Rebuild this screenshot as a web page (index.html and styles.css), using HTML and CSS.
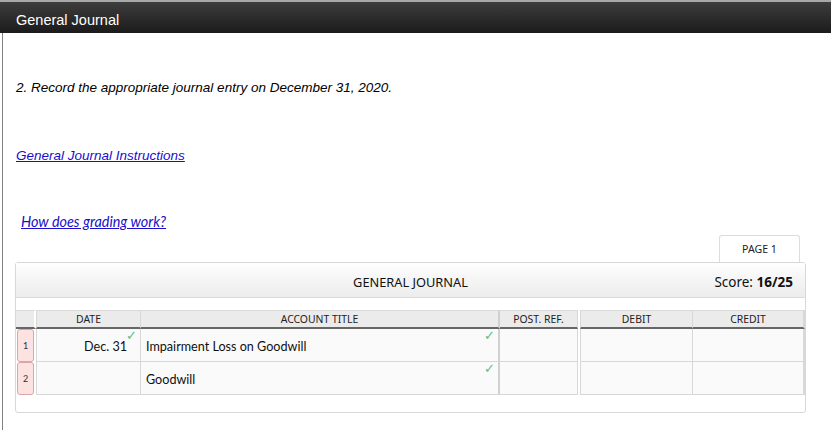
FILE: index.html
```html
<!DOCTYPE html>
<html>
<head>
<meta charset="utf-8">
<link rel="stylesheet" href="styles.css">
</head>
<body>
<div class="topbar">General Journal</div>
<div class="main">
  <p class="question">2. Record the appropriate journal entry on December 31, 2020.</p>
  <p class="instr"><a href="#">General Journal Instructions</a></p>
  <p class="grading"><a href="#">How does grading work?</a></p>
  <div class="tabs"><div class="tab">PAGE 1</div></div>
  <div class="panel">
    <div class="panel-head">
      <span class="panel-title">GENERAL JOURNAL</span>
      <span class="score">Score: <b>16/25</b></span>
    </div>
    <div class="grid">
      <div class="h num"></div>
      <div class="h date">DATE</div>
      <div class="h acct">ACCOUNT TITLE</div>
      <div class="h ref">POST. REF.</div>
      <div class="sp"></div>
      <div class="h deb">DEBIT</div>
      <div class="h cred">CREDIT</div>

      <div class="c num"><span class="rn">1</span></div>
      <div class="c date">Dec. 31<span class="chk">✓</span></div>
      <div class="c acct">Impairment Loss on Goodwill<span class="chk">✓</span></div>
      <div class="c ref"></div>
      <div class="sp"></div>
      <div class="c deb"></div>
      <div class="c cred"></div>

      <div class="c num"><span class="rn">2</span></div>
      <div class="c date"></div>
      <div class="c acct">Goodwill<span class="chk">✓</span></div>
      <div class="c ref"></div>
      <div class="sp"></div>
      <div class="c deb"></div>
      <div class="c cred"></div>
    </div>
  </div>
</div>
</body>
</html>
```
FILE: styles.css
```css
html, body {
  margin: 0;
  padding: 0;
  background: #fff;
}
body {
  font-family: "Liberation Sans", Arial, sans-serif;
  color: #000;
}
.topbar {
  box-sizing: content-box;
  border-top: 2px solid #a8a8a8;
  background: linear-gradient(#3d3d3d, #1b1b1b);
  color: #fff;
  font-size: 14.5px;
  line-height: 28px;
  padding: 4px 0 0 16px;
  height: 27px;
}
.main {
  margin-left: 2px;
  border-left: 1px solid #808080;
  height: 397px;
  padding-left: 12px;
  overflow: hidden;
}
.question {
  margin: 47px 0 0 1px;
  font-size: 13.5px;
  font-style: italic;
  line-height: 16px;
}
.instr {
  margin: 52px 0 0 1px;
  font-size: 13.5px;
  font-style: italic;
  line-height: 16px;
}
.instr a, .grading a {
  color: #1a0dcc;
}
.grading {
  margin: 50px 0 0 6px;
  font-family: Lato, sans-serif;
  font-size: 14.4px;
  font-style: italic;
  line-height: 16px;
}
.tabs {
  margin-top: 5px;
  display: flex;
  justify-content: flex-end;
  padding-right: 31px;
}
.tab {
  width: 79px;
  height: 26px;
  border: 1px solid #dcdcdc;
  border-bottom: none;
  border-radius: 3px 3px 0 0;
  background: #fff;
  font-family: "Noto Sans", sans-serif;
  font-size: 10.6px;
  line-height: 26px;
  text-align: center;
  color: #222;
}
.panel {
  width: 789px;
  height: 149px;
  border: 1px solid #d8d8d8;
  border-radius: 3px;
  font-family: Lato, sans-serif;
}
.panel-head {
  box-sizing: border-box;
  padding-top: 3px;
  height: 35px;
  border-bottom: 1px solid #dcdcdc;
  background: linear-gradient(#fefefe, #ececec);
  display: flex;
  align-items: center;
  justify-content: center;
  position: relative;
  font-family: "Noto Sans", sans-serif;
}
.panel-title {
  font-size: 12.8px;
  color: #111;
}
.score {
  position: absolute;
  right: 12px;
  top: 10px;
  font-size: 13.5px;
  color: #111;
}
.score b {
  font-weight: 700;
}
.grid {
  margin-top: 12px;
  display: grid;
  grid-template-columns: 20px 105px 359px 78px 2px 113px 112px;
  grid-template-rows: 19px 33px 33px;
}
.h {
  background: #ebebeb;
  border-top: 1px solid #dadada;
  border-bottom: 2px solid #666;
  font-family: "Noto Sans", sans-serif;
  font-size: 10.4px;
  line-height: 16px;
  text-align: center;
  color: #222;
  box-sizing: border-box;
}
.h.num { border-right: 2px solid #fff; }
.h.date { border-left: 1px solid #d8d8d8; border-right: 1px solid #d8d8d8; }
.h.acct { border-right: 2px solid #d0d0d0; }
.h.ref { border-right: 1px solid #d8d8d8; }
.h.deb { border-left: 1px solid #d8d8d8; border-right: 1px solid #d8d8d8; }
.h.cred { border-right: 2px solid #d8d8d8; }
.sp { background: #fff; }
.c {
  background: #fafafa;
  border-bottom: 1px solid #d8d8d8;
  box-sizing: border-box;
  position: relative;
  font-size: 12.6px;
  color: #111;
  display: flex;
  align-items: center;
  padding-top: 2px;
}
.c.num {
  background: #fff;
  border-bottom: none;
  padding: 0 2px 0 1px;
}
.rn {
  display: flex;
  align-items: center;
  justify-content: center;
  width: 100%;
  height: 100%;
  box-sizing: border-box;
  background: #fde2e2;
  border: 1px solid #dca5a5;
  border-radius: 3px;
  font-size: 9px;
  color: #333;
}
.c.date {
  border-left: 1px solid #d8d8d8;
  border-right: 1px solid #d8d8d8;
  justify-content: flex-end;
  padding-right: 13px;
}
.c.acct {
  border-right: 2px solid #d0d0d0;
  padding-left: 5px;
}
.c.ref { border-right: 1px solid #d8d8d8; }
.c.deb { border-left: 1px solid #d8d8d8; border-right: 1px solid #d8d8d8; }
.c.cred { border-right: 2px solid #d8d8d8; }
.chk {
  position: absolute;
  top: 0;
  right: 3px;
  font-family: "DejaVu Sans", sans-serif;
  font-size: 13px;
  line-height: 14px;
  font-weight: bold;
  color: #55c08e;
}
```
